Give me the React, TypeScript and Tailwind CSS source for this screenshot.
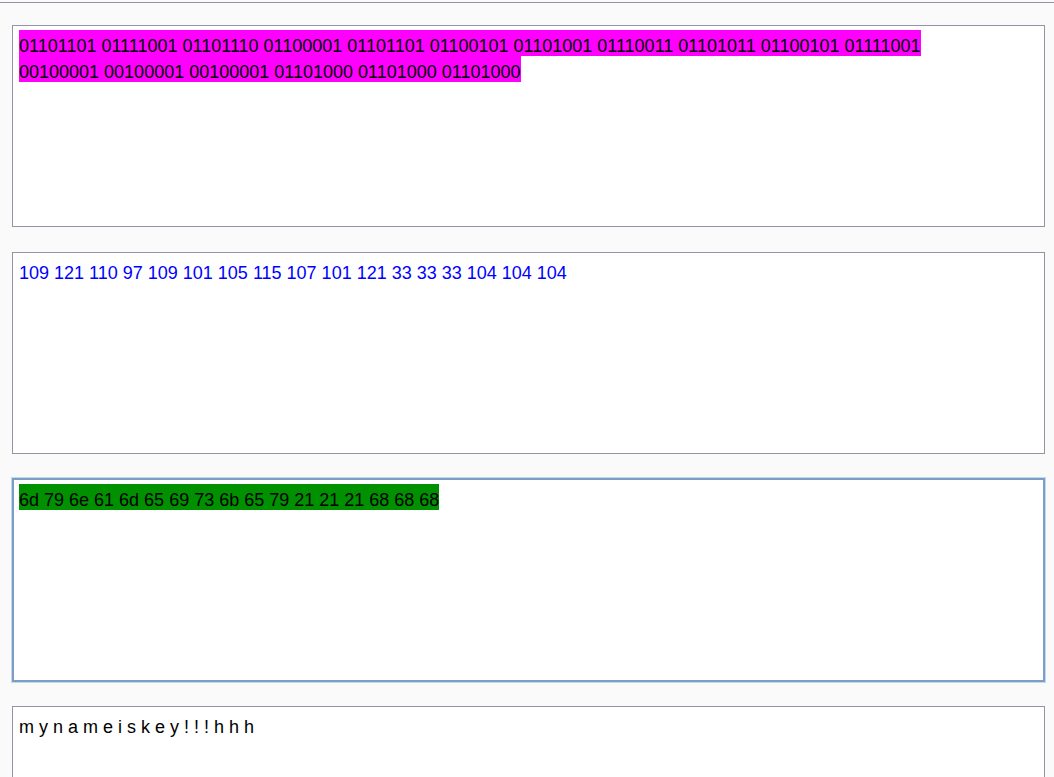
const binary =
  '01101101 01111001 01101110 01100001 01101101 01100101 01101001 01110011 01101011 01100101 01111001 00100001 00100001 00100001 01101000 01101000 01101000';
const decimal = '109 121 110 97 109 101 105 115 107 101 121 33 33 33 104 104 104';
const hex = '6d 79 6e 61 6d 65 69 73 6b 65 79 21 21 21 68 68 68';
const plain = 'm y n a m e i s k e y ! ! ! h h h';

export default function App() {
  return (
    <div className="min-h-screen bg-[#fafafa] font-['Liberation_Sans',Arial,sans-serif] text-[18px] leading-[26px]">
      {/* top rule */}
      <div className="h-[3px] border-b border-[#9295a5]" />

      {/* binary */}
      <div className="mt-[22px] ml-[12px] w-[1033px] h-[202px] border border-[#9295a5] bg-white pl-[6px] pr-[70px] pt-[7px] text-black">
        <span className="bg-[#ff00ff] pt-[6px]">{binary}</span>
      </div>

      {/* decimal */}
      <div className="mt-[25px] ml-[12px] w-[1033px] h-[202px] border border-[#9295a5] bg-white pl-[6px] pr-[70px] pt-[7px] text-[#0000ff]">
        {decimal}
      </div>

      {/* hex (focused) */}
      <div className="mt-[24px] ml-[12px] w-[1033px] h-[204px] border-2 border-[#7d9ec4] shadow-[0_0_0_1px_#c3d7ef] bg-white pl-[5px] pr-[70px] pt-[7px] text-black">
        <span className="bg-[#009000] pt-[6px]">{hex}</span>
      </div>

      {/* text */}
      <div className="mt-[24px] ml-[12px] w-[1033px] h-[202px] border border-[#9295a5] bg-white pl-[6px] pr-[70px] pt-[7px] text-black">
        {plain}
      </div>
    </div>
  );
}
